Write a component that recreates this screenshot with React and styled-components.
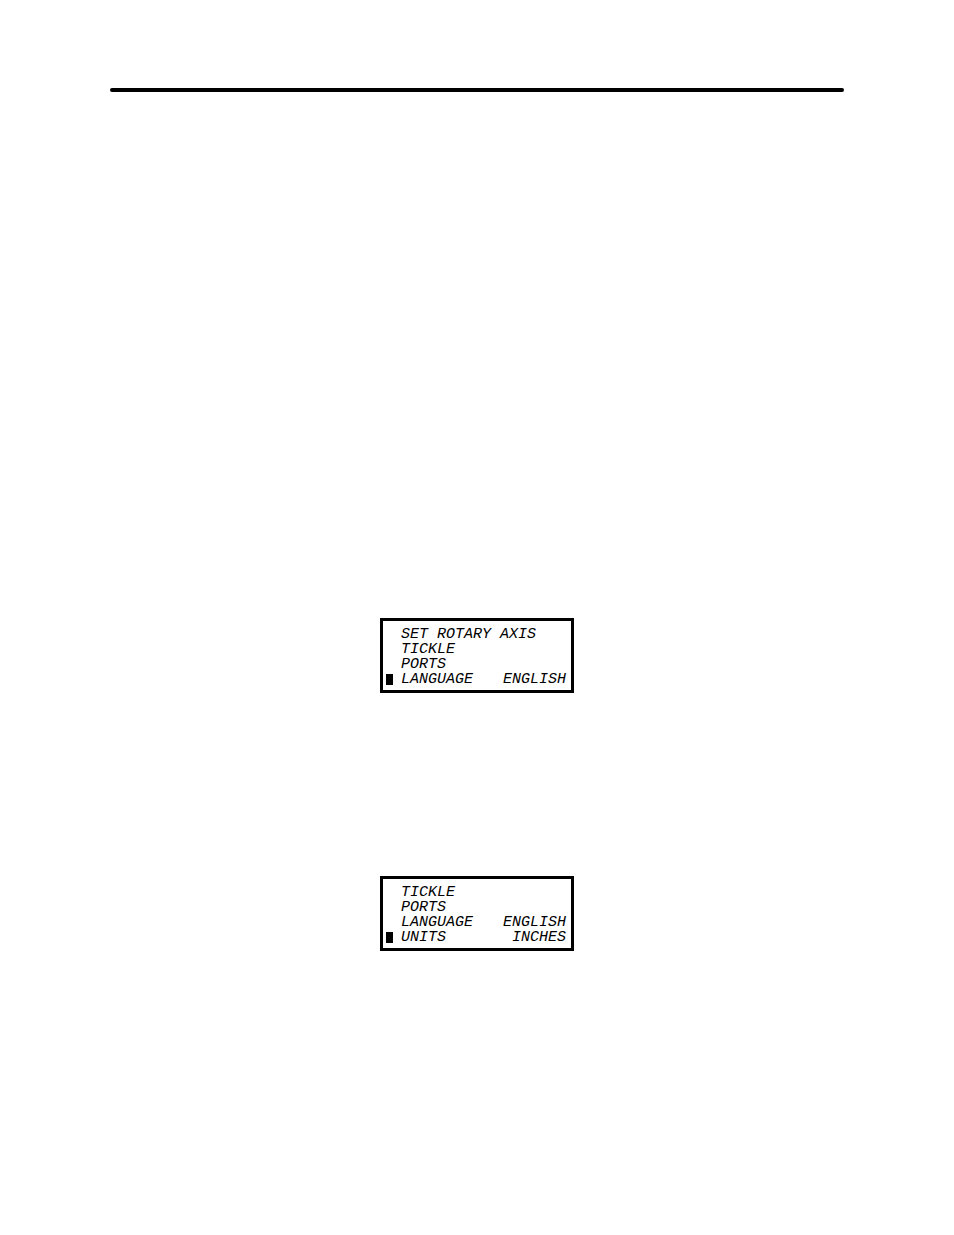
import styled, { createGlobalStyle } from 'styled-components';

const GlobalStyle = createGlobalStyle`
  * {
    box-sizing: border-box;
  }

  body {
    margin: 0;
    background: #fff;
    color: #000;
  }
`;

const ManualPage = styled.main`
  display: flex;
  flex-direction: column;
  align-items: center;
  padding: 88px 110px 280px;
`;

const HeaderRule = styled.hr`
  width: 100%;
  height: 4px;
  margin: 0 0 526px;
  border: 0;
  border-radius: 2px;
  background: #000;
`;

const ScreenList = styled.div`
  display: flex;
  flex-direction: column;
  gap: 183px;
`;

const Screen = styled.section`
  width: 194px;
  padding: 6px 5px 3px 3px;
  border: 3px solid #000;
  font: italic 15px/15px 'Liberation Mono', monospace;
`;

const Line = styled.div`
  display: grid;
  grid-template-columns: 7px 1fr auto;
  column-gap: 8px;
  align-items: center;
  white-space: nowrap;
`;

const Cursor = styled.span`
  height: 11px;
  background: ${({ $selected }) => ($selected ? '#000' : 'transparent')};
`;

const setupScreens = [
  {
    id: 'language',
    lines: [
      { label: 'SET ROTARY AXIS' },
      { label: 'TICKLE' },
      { label: 'PORTS' },
      { label: 'LANGUAGE', value: 'ENGLISH', selected: true },
    ],
  },
  {
    id: 'units',
    lines: [
      { label: 'TICKLE' },
      { label: 'PORTS' },
      { label: 'LANGUAGE', value: 'ENGLISH' },
      { label: 'UNITS', value: 'INCHES', selected: true },
    ],
  },
];

const SetupScreen = ({ lines }) => (
  <Screen>
    {lines.map(({ label, value, selected }) => (
      <Line key={label}>
        <Cursor $selected={selected} />
        <span>{label}</span>
        {value && <span>{value}</span>}
      </Line>
    ))}
  </Screen>
);

const App = () => (
  <>
    <GlobalStyle />
    <ManualPage>
      <HeaderRule />
      <ScreenList>
        {setupScreens.map(({ id, lines }) => (
          <SetupScreen key={id} lines={lines} />
        ))}
      </ScreenList>
    </ManualPage>
  </>
);

export default App;
